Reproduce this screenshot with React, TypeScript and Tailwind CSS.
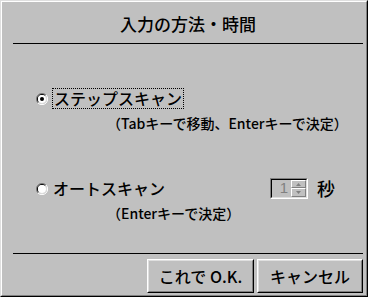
import React from 'react'

const jp = { fontFamily: '"Noto Sans CJK JP", "Liberation Sans", sans-serif' }

function Radio({ checked }: { checked: boolean }) {
  return (
    <svg width="12" height="12" viewBox="0 0 12 12" className="shrink-0">
      <path d="M10 2 A5.5 5.5 0 0 0 2 10" fill="none" stroke="#808080" strokeWidth="1" />
      <path d="M9.3 2.7 A4.5 4.5 0 0 0 2.7 9.3" fill="none" stroke="#000" strokeWidth="1" />
      <path d="M2 10 A5.5 5.5 0 0 0 10 2" fill="none" stroke="#fff" strokeWidth="1" />
      <path d="M2.7 9.3 A4.5 4.5 0 0 0 9.3 2.7" fill="none" stroke="#dfdfdf" strokeWidth="1" />
      <circle cx="6" cy="6" r="4" fill="#fff" />
      {checked && <circle cx="6" cy="6" r="2" fill="#000" />}
    </svg>
  )
}

function Button({ label, className }: { label: string; className?: string }) {
  return (
    <div className={'border border-t-white border-l-white border-b-black border-r-black ' + (className ?? '')}>
      <div className="h-full flex items-center justify-center border border-t-[#dfdfdf] border-l-[#dfdfdf] border-b-[#808080] border-r-[#808080] text-[16px] font-medium text-black">
        {label}
      </div>
    </div>
  )
}

export default function App() {
  return (
    <div className="w-[368px] h-[297px] bg-[#c0c0c0] border border-t-[#dfdfdf] border-l-[#dfdfdf] border-b-black border-r-black" style={jp}>
      <div className="h-full border border-t-white border-l-white border-b-[#808080] border-r-[#808080] flex flex-col pl-[11px] pr-[3px]">
        <div className="h-[41px] flex items-center justify-center text-[17px] font-medium text-black pt-[2px]">
          入力の方法・時間
        </div>
        <div className="h-px bg-black" />

        <div className="flex-1 flex flex-col">
          <div className="mt-[44px] flex items-center ml-[23px]">
            <Radio checked />
            <span className="ml-[4px] px-[1px] leading-[19px] border border-dotted border-black text-[16px] font-medium text-black">
              ステップスキャン
            </span>
          </div>
          <div className="mt-[4px] ml-[94px] text-[14px] font-medium text-black leading-[20px]">
            （Tabキーで移動、Enterキーで決定）
          </div>

          <div className="mt-[42px] flex items-center ml-[23px]">
            <Radio checked={false} />
            <span className="ml-[5px] leading-[21px] text-[16px] font-medium text-black w-[217px]">
              オートスキャン
            </span>
            <div className="flex border border-t-[#808080] border-l-[#808080] border-b-white border-r-white">
              <div className="flex border border-t-black border-l-black border-b-[#dfdfdf] border-r-[#dfdfdf] bg-[#c0c0c0]">
                <div className="w-[19px] h-[17px] flex items-center justify-end pr-[3px] text-[15px] text-[#808080]" style={{ fontFamily: '"Liberation Sans", sans-serif' }}>
                  1
                </div>
                <div className="flex flex-col w-[15px]">
                  <div className="h-[8px] flex items-center justify-center border border-t-white border-l-white border-b-[#808080] border-r-[#808080] bg-[#c0c0c0]">
                    <svg width="5" height="3" viewBox="0 0 5 3"><path d="M2.5 0 L5 3 L0 3 Z" fill="#808080" /></svg>
                  </div>
                  <div className="h-[9px] flex items-center justify-center border border-t-white border-l-white border-b-[#808080] border-r-[#808080] bg-[#c0c0c0]">
                    <svg width="5" height="3" viewBox="0 0 5 3"><path d="M0 0 L5 0 L2.5 3 Z" fill="#808080" /></svg>
                  </div>
                </div>
              </div>
            </div>
            <span className="ml-[9px] text-[18px] font-medium text-black">秒</span>
          </div>
          <div className="mt-[1px] ml-[94px] text-[14px] font-medium text-black leading-[20px]">
            （Enterキーで決定）
          </div>
        </div>

        <div className="h-px bg-black" />
        <div className="flex justify-end gap-[3px] mt-[5px] mb-[2px]">
          <Button label="これで O.K." className="w-[107px] h-[34px]" />
          <Button label="キャンセル" className="w-[106px] h-[34px]" />
        </div>
      </div>
    </div>
  )
}
